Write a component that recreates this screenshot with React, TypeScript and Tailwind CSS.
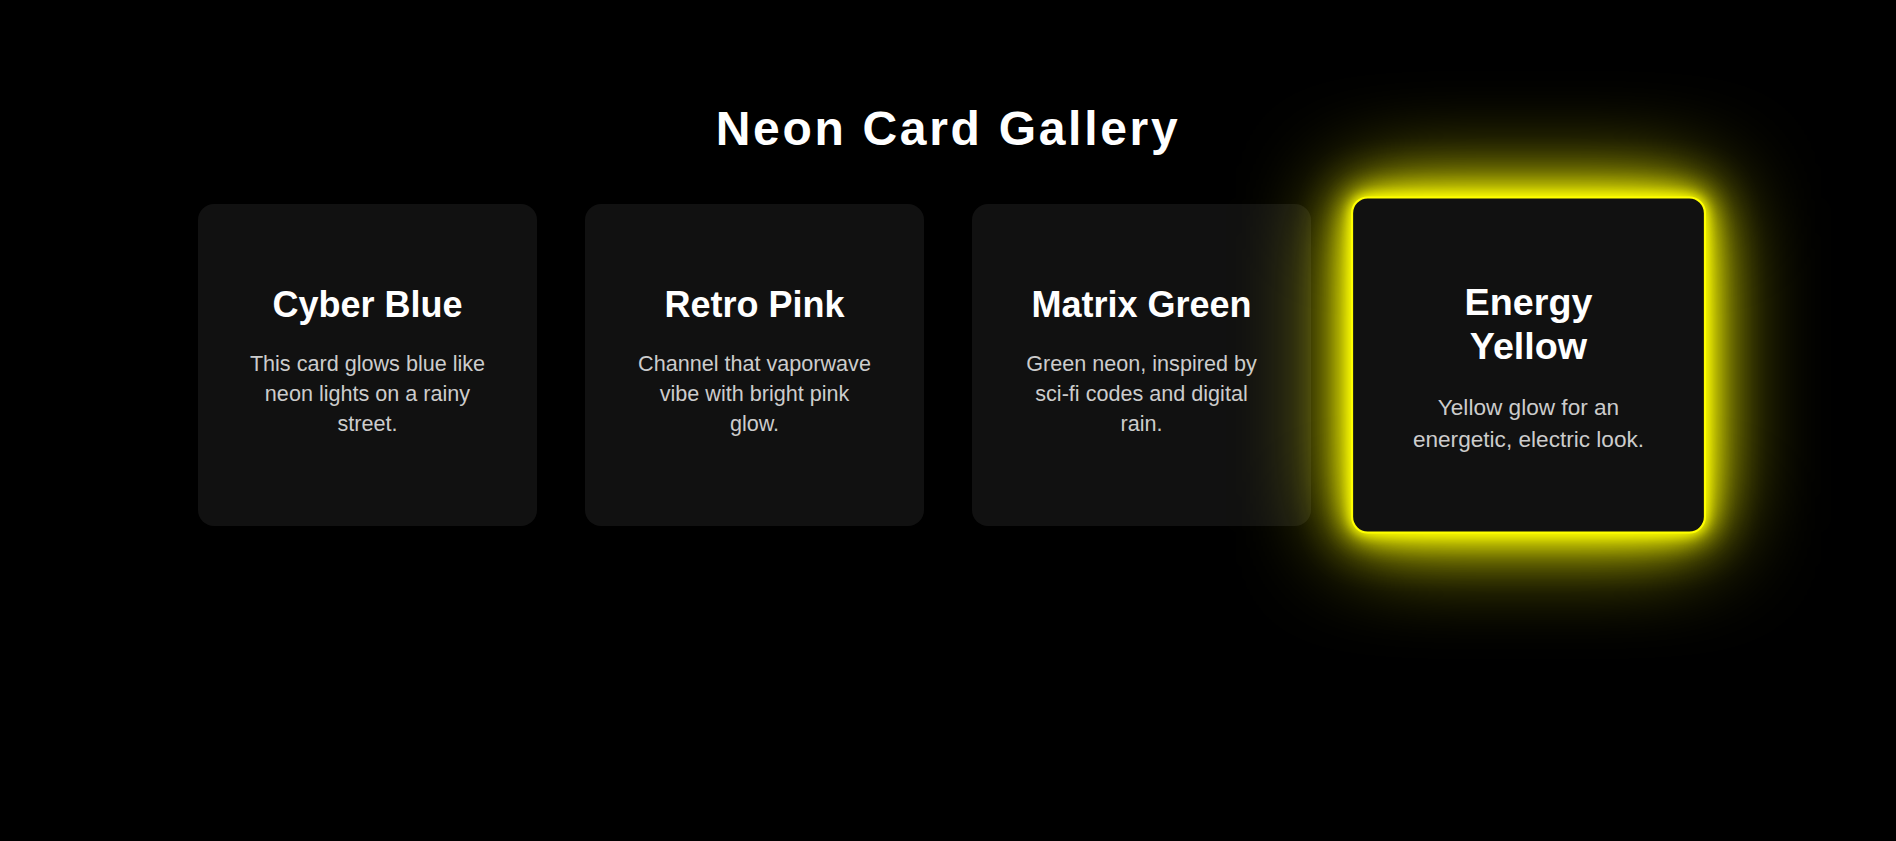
const cards = [
  {
    title: 'Cyber Blue',
    text: 'This card glows blue like neon lights on a rainy street.',
    active: false,
  },
  {
    title: 'Retro Pink',
    text: 'Channel that vaporwave vibe with bright pink glow.',
    active: false,
  },
  {
    title: 'Matrix Green',
    text: 'Green neon, inspired by sci-fi codes and digital rain.',
    active: false,
  },
  {
    title: 'Energy Yellow',
    text: 'Yellow glow for an energetic, electric look.',
    active: true,
  },
];

export default function App() {
  return (
    <div className="min-h-screen bg-black pt-[101px] font-['Liberation_Sans',Arial,sans-serif] text-white">
      <h1 className="mb-[48px] text-center text-[48px] font-bold leading-[normal] tracking-[2.7px]">
        Neon Card Gallery
      </h1>

      <div className="flex justify-center gap-[48px]">
        {cards.map((card) => (
          <div
            key={card.title}
            className={`flex h-[322px] w-[339px] flex-col items-center rounded-[16px] border-2 bg-[#111] px-[46px] pt-[78px] text-center ${
              card.active
                ? 'relative z-10 scale-[1.047] border-[#ff0] shadow-[0_0_10px_#ff0,0_0_25px_#ff0,0_0_50px_#ff0,0_0_100px_#ff0]'
                : 'border-transparent'
            }`}
          >
            <h2 className="mb-[23px] text-[36px] font-bold leading-[normal]">{card.title}</h2>
            <p className="text-[21.6px] leading-[30px] text-[#ccc]">{card.text}</p>
          </div>
        ))}
      </div>
    </div>
  );
}
